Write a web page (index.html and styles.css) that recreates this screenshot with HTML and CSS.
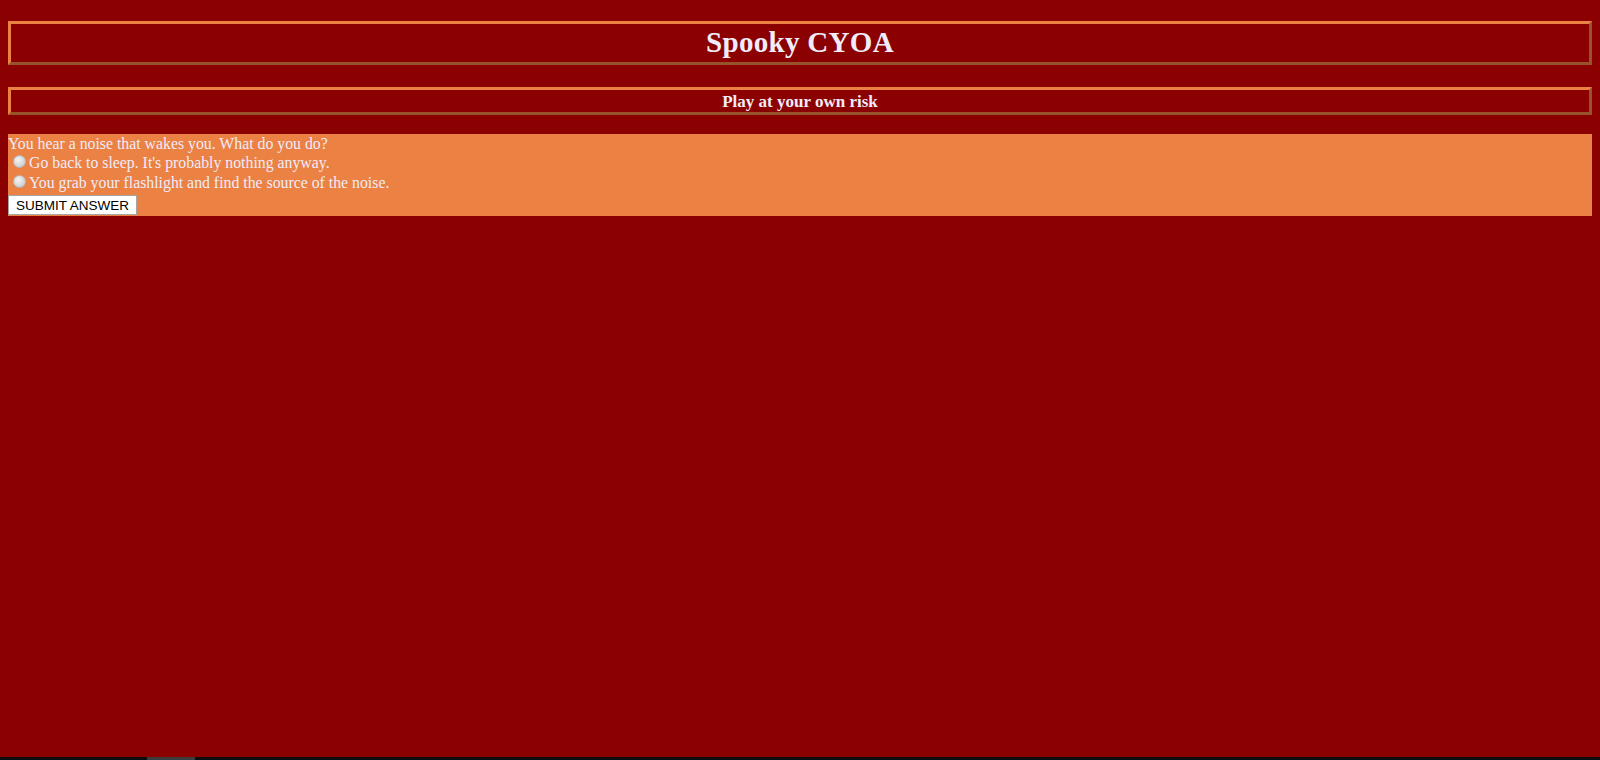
FILE: index.html
```html
<!DOCTYPE html>
<html>
<head>
<meta charset="utf-8">
<title>Spooky CYOA</title>
<link rel="stylesheet" href="styles.css">
</head>
<body>
<header class="title-box"><h1 class="title">Spooky CYOA</h1></header>
<div class="sub-box"><h2 class="subtitle">Play at your own risk</h2></div>
<form class="story">
  <div class="question">You hear a noise that wakes you. What do you do?</div>
  <label class="choice"><input type="radio" name="c" class="radio">Go back to sleep. It's probably nothing anyway.</label>
  <label class="choice"><input type="radio" name="c" class="radio">You grab your flashlight and find the source of the noise.</label>
  <button type="button" class="submit">SUBMIT ANSWER</button>
</form>
<div class="hscroll"><div class="thumb"></div></div>
</body>
</html>
```
FILE: styles.css
```css
html, body { height: 100%; }
body {
  margin: 0;
  padding: 21px 8px 0;
  box-sizing: border-box;
  background: #8b0000;
  color: #f0ecfb;
  font-family: "Liberation Serif", "DejaVu Serif", serif;
  overflow: hidden;
}
.title-box {
  border: 3px outset #eb8142;
  height: 44px;
  box-sizing: border-box;
  display: flex;
  align-items: center;
  justify-content: center;
}
.title {
  margin: 0;
  font-size: 29px;
  font-weight: bold;
  letter-spacing: 0.3px;
  line-height: 1;
  padding-bottom: 2px;
}
.sub-box {
  margin-top: 22px;
  border: 3px outset #eb8142;
  height: 28px;
  box-sizing: border-box;
  display: flex;
  align-items: center;
  justify-content: center;
}
.subtitle {
  margin: 0;
  font-size: 17px;
  font-weight: bold;
  line-height: 1;
}
.story {
  margin-top: 19px;
  background: #eb8142;
  height: 82px;
  display: flex;
  flex-direction: column;
  align-items: flex-start;
  font-size: 15.8px;
}
.question { line-height: 19px; height: 19px; }
.choice { display: flex; align-items: center; line-height: 20px; height: 20px; }
.radio {
  appearance: none;
  -webkit-appearance: none;
  width: 13px;
  height: 13px;
  margin: 0 3px 3px 5px;
  border-radius: 50%;
  border: 1px solid #b8b8b8;
  background: radial-gradient(circle at 40% 35%, #f4f4f4 0%, #d6d6d6 60%, #bdbdbd 100%);
  box-sizing: border-box;
}
.submit {
  margin-top: 2px;
  height: 20px;
  width: 129px;
  padding: 0;
  background: #fff;
  border: 1px solid #a6a6a6;
  font-family: "Liberation Sans", Arial, sans-serif;
  font-size: 13.5px;
  color: #000;
  border-radius: 0;
}
.hscroll {
  position: fixed;
  left: 0;
  right: 0;
  bottom: 0;
  height: 3px;
  background: #0d0f0f;
}
.thumb {
  position: absolute;
  left: 147px;
  width: 48px;
  top: 0;
  bottom: 0;
  background: #3c3c3c;
}
```
